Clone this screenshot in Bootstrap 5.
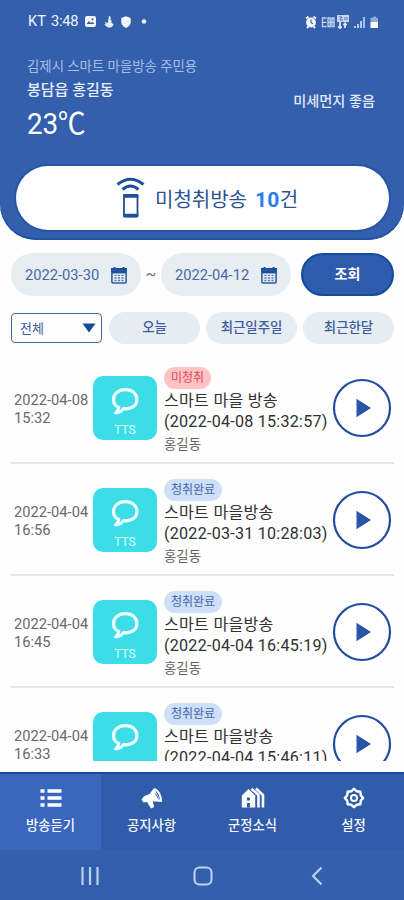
<!DOCTYPE html>
<html lang="ko">
<head>
<meta charset="utf-8">
<meta name="viewport" content="width=device-width, initial-scale=1">
<title>김제시 스마트 마을방송</title>
<link href="https://cdn.jsdelivr.net/npm/bootstrap@5.3.0/dist/css/bootstrap.min.css" rel="stylesheet">
<style>
:root{--brand:#335fad;--deep:#164a9c}
body{font-family:Roboto,"Noto Sans CJK KR",sans-serif;background:#335fad;line-height:1}
svg{display:block;flex:none}
.phone{width:404px;height:900px;background:#fefefe;overflow:hidden}
.top-area{height:240px;flex:none;background:var(--brand);border-radius:0 0 36px 36px;box-shadow:inset 0 -2px 0 #2353a3}
.status{height:42px;padding:1px 25px 0 28px;color:#f1f5fd;font-size:14.6px}
.status .clock{margin-left:5px;letter-spacing:-.2px}
.who{height:124px;padding:15px 29px 0 27px}
.app-name{font-size:13.4px;line-height:20px;color:#a6bfe6}
.town{font-size:15px;line-height:27px;font-weight:500;color:#e6eefc}
.temp{font-size:30px;line-height:40px;color:#fff}
.temp span{letter-spacing:-.3px;display:inline-block;transform:scaleX(.93);transform-origin:left}
.dust{font-size:14.2px;font-weight:500;color:#e0e9fa;padding-top:37px}
.notice{height:64px;margin:0 15px 0 16px;background:#fff;box-shadow:0 0 0 2px #2555a5;color:#2c5295;font-size:20px;padding:0 0 0 100px}
.notice .phrase{margin:4px 0 0 10px}
.notice b{color:#2a7de8;font-weight:700;font-size:21px;letter-spacing:.3px}
.filters{padding:13px 10px 0 11px}
.date-box{width:130px;height:43px;background:#e8edf4;color:#4668a4;font-size:14.7px;padding:1px 14px 0 14px}
.tilde{width:20px}
.quick{gap:6px}
.soft{height:32px;background:#e7ebf2;color:#3b5c9c;font-size:13.4px;font-weight:500}
.query{width:93px;height:43px;background:#2d5cac;color:#fff;font-size:14px;font-weight:700;border:2px solid #164a9c}
.kind{width:91px;height:30px;margin-right:1px;border:1px solid #44699f;border-radius:4px;color:#3b5c9c;font-size:13px;padding:0 5px 0 8px}
.feed{height:417px;flex:none;overflow:hidden;padding:0 10px 0 11px}
.entry{height:112px;flex:none;border-bottom:2px solid #e4e4e4;padding:0 3px 0 3px}
.entry:first-child{height:120.4px;padding-top:8.4px}
.stamp{width:79px;font-size:14.7px;line-height:18px;color:#696969;padding-top:39px}
.tile{width:64px;height:64px;margin-top:24px;background:#3bdde7;border-radius:10px;color:#e4ffff;font-size:12px;padding-top:10px}
.info{width:172px;padding:15px 0 0 7px;white-space:nowrap;color:#303030}
.tag{display:inline-block;height:22px;line-height:23px;border-radius:11px;padding:0 7px;font-size:12px}
.unheard{background:#ffc3c4;color:#df4a58}
.heard{background:#cfdff8;color:#4166ab}
.subject{font-size:16.1px;line-height:20.5px;letter-spacing:.25px;margin-top:2px}
.sender{font-size:13.4px;line-height:16px;color:#666;margin-top:5px}
.play{margin:26px -1px 0 0}
.tabs{height:78px;flex:none;background:#305cab;border-top:2px solid #174a9e;color:#f4f7ff;font-size:13.3px;font-weight:500}
.tabs .tab{padding-top:13px}
.tabs .tab span{margin-top:10px}
.tabs .on{background:#3967bd}
.keys{height:50px;flex:none;background:#335fad;padding:1px 81px 0 80px}
.keys .home{margin-right:5px}
</style>
</head>
<body>
<svg width="0" height="0" class="d-none">
<symbol id="cal" viewBox="0 0 16 18"><path d="M1 3h14v3H1zM3.5 1v3M12.5 1v3" fill="#1b4f9e" stroke="#1b4f9e" stroke-width="2"/><rect x=".9" y="5" width="14.2" height="12" rx="1" fill="#e8edf4" stroke="#315f9f" stroke-width="1.6"/><path d="M1 6.2h14" stroke="#1b4f9e" stroke-width="2.4"/><path d="M3.4 9.4h9.3M3.4 12h9.3M3.4 14.5h9.3" stroke="#5b7eb2" stroke-width="1.4" stroke-dasharray="2.2 1.3"/></symbol>
<symbol id="bubble" viewBox="0 0 28 28"><path d="M14.5 3.4c-6.3 0-11.2 3.7-11.2 9.1 0 3.4 1.8 6 4.8 7.5-.4 2.3-1.3 3.8-2.9 5.2 3.3-.2 5.7-1.8 7.4-4.1 7.7 1 12.5-3 12.5-8.6 0-5.4-4.7-9.1-10.6-9.1z" fill="none" stroke="#f2ffff" stroke-width="3" stroke-linejoin="round"/></symbol>
<symbol id="playicon" viewBox="0 0 60 60"><circle cx="30" cy="30" r="28" fill="#fff" stroke="#214da0" stroke-width="2.2"/><path d="M24.5 20.7v18.6L39 30z" fill="#2a58a8"/></symbol>
</svg>
<div class="phone d-flex flex-column">
<header class="top-area">
  <div class="status d-flex align-items-center">
    <span>KT</span><span class="clock">3:48</span>
    <svg style="margin-left:7px" width="11" height="11" viewBox="0 0 11 11"><rect width="11" height="11" rx="2" fill="#f1f5fd"/><path d="M1.500 8l2.400-3 2 2 1.500-1.300L9.500 8z" fill="#335fad"/><circle cx="7.500" cy="3.300" r="1" fill="#335fad"/></svg>
    <svg class="ms-2" width="10" height="12" viewBox="0 0 10 12"><path d="M5 0c2 .5 2.200 2 1.300 3.500L8 5 7 6.500l2.600 1.700C9 11 6.500 12 4 11.500L.2 8.800 1.800 8 .8 6l3 1z" fill="#e8effc"/></svg>
    <svg style="margin-left:7px" width="10" height="12" viewBox="0 0 10 12"><path d="M5 .2 9.700 2v4.200C9.500 9 7.500 11 5 12 2.500 11 .5 9 .3 6.200V2z" fill="#f5f8ff"/></svg>
    <svg class="ms-2" width="10" height="5" viewBox="0 0 10 5"><circle cx="5" cy="2.500" r="2.300" fill="#f1f5fd"/></svg>
    <svg class="ms-auto" width="74" height="16" viewBox="0 0 74 16">
      <circle cx="6" cy="8.500" r="4.900" fill="#f1f5fd"/><path d="M1 4.500 3.500 2.500M11 4.500 8.500 2.500M2 14l1.500-1.500M10 14l-1.500-1.500" stroke="#f1f5fd" stroke-width="1.800"/><path d="M6 5.500v3.200l2 1" fill="none" stroke="#335fad" stroke-width="1.100"/>
      <g fill="none" stroke="#c5d5f1" stroke-width="1.300"><path d="M21.500 4h-4v8.500h4M17.500 8.300h4M23 4h2.200v8.500H23zM27 4h2v8.500h-2zM23 8.300h6"/></g>
      <path d="M32 1h12v7H32z" fill="#c5d5f1"/><path d="M34 3h3l-2 3h3M40 3v3M42 3v3" fill="none" stroke="#335fad" stroke-width=".8"/><path d="M35 14V8M33.300 12.500 35 14l1.600-1.500M40 14V8.500M38.400 11 40 9.500l1.600 1.500" fill="none" stroke="#e1eafa" stroke-width="1.800"/>
      <path d="M49 12h2v2h-2zM52 10h2v4h-2zM55 7h2v7h-2z" fill="#b9cbea"/><path d="M58 3h2v11h-2z" fill="#a5bce4"/>
      <path d="M68 2.500h3v1.300h2V8h-7.500V3.800H68z" fill="#8facdc"/><path d="M65.500 8H73v6h-7.500z" fill="#fff"/>
    </svg>
  </div>
  <div class="who d-flex justify-content-between">
    <div><div class="app-name">김제시 스마트 마을방송 주민용</div><div class="town">봉담읍 홍길동</div><div class="temp"><span>23℃</span></div></div>
    <div class="dust">미세먼지 좋음</div>
  </div>
  <div class="notice rounded-pill d-flex align-items-center">
    <svg width="29" height="44" viewBox="0 0 29 44" fill="none" stroke="#1e5099"><path d="M1.500 8.500q13-10.500 26 0" stroke-width="3"/><path d="M6.500 13.500q8-7 16 0" stroke-width="3"/><rect x="8" y="19" width="13.500" height="21.500" rx="1" stroke-width="1.800"/><path d="M7.200 20h15.100M7.200 39.500h15.100" stroke-width="3.400"/></svg>
    <div class="phrase"><span>미청취방송</span><span class="ms-2"><b>10</b>건</span></div>
  </div>
</header>
<section class="filters flex-shrink-0">
  <div class="d-flex align-items-center">
    <div class="date-box rounded-pill d-flex align-items-center justify-content-between"><span>2022-03-30</span><svg width="16" height="18"><use href="#cal"/></svg></div>
    <span class="tilde text-center text-secondary">~</span>
    <div class="date-box rounded-pill d-flex align-items-center justify-content-between"><span>2022-04-12</span><svg width="16" height="18"><use href="#cal"/></svg></div>
    <button class="query btn rounded-pill p-0 ms-auto">조회</button>
  </div>
  <div class="quick d-flex align-items-center mt-3">
    <div class="kind flex-shrink-0 d-flex align-items-center justify-content-between"><span>전체</span><svg width="14" height="10" viewBox="0 0 14 10"><path d="M.5.5h13L7 9.500z" fill="#164a9c"/></svg></div>
    <div class="soft col rounded-pill d-flex align-items-center justify-content-center">오늘</div>
    <div class="soft col rounded-pill d-flex align-items-center justify-content-center">최근일주일</div>
    <div class="soft col rounded-pill d-flex align-items-center justify-content-center">최근한달</div>
  </div>
</section>
<main class="feed d-flex flex-column">
  <article class="entry d-flex">
    <div class="stamp">2022-04-08<br>15:32</div>
    <div class="tile d-flex flex-column align-items-center"><svg width="30" height="30"><use href="#bubble"/></svg><span class="mt-1 pt-1">TTS</span></div>
    <div class="info"><span class="tag unheard">미청취</span><div class="subject">스마트 마을 방송<br>(2022-04-08 15:32:57)</div><div class="sender">홍길동</div></div>
    <svg class="play ms-auto" width="60" height="60"><use href="#playicon"/></svg>
  </article>
  <article class="entry d-flex">
    <div class="stamp">2022-04-04<br>16:56</div>
    <div class="tile d-flex flex-column align-items-center"><svg width="30" height="30"><use href="#bubble"/></svg><span class="mt-1 pt-1">TTS</span></div>
    <div class="info"><span class="tag heard">청취완료</span><div class="subject">스마트 마을방송<br>(2022-03-31 10:28:03)</div><div class="sender">홍길동</div></div>
    <svg class="play ms-auto" width="60" height="60"><use href="#playicon"/></svg>
  </article>
  <article class="entry d-flex">
    <div class="stamp">2022-04-04<br>16:45</div>
    <div class="tile d-flex flex-column align-items-center"><svg width="30" height="30"><use href="#bubble"/></svg><span class="mt-1 pt-1">TTS</span></div>
    <div class="info"><span class="tag heard">청취완료</span><div class="subject">스마트 마을방송<br>(2022-04-04 16:45:19)</div><div class="sender">홍길동</div></div>
    <svg class="play ms-auto" width="60" height="60"><use href="#playicon"/></svg>
  </article>
  <article class="entry d-flex">
    <div class="stamp">2022-04-04<br>16:33</div>
    <div class="tile d-flex flex-column align-items-center"><svg width="30" height="30"><use href="#bubble"/></svg></div>
    <div class="info"><span class="tag heard">청취완료</span><div class="subject">스마트 마을방송<br>(2022-04-04 15:46:11)</div></div>
    <svg class="play ms-auto" width="60" height="60"><use href="#playicon"/></svg>
  </article>
</main>
<nav class="tabs d-flex mt-auto">
  <div class="tab on col d-flex flex-column align-items-center"><svg width="24" height="22" viewBox="0 0 24 22" stroke="#fff" stroke-width="3.400"><path d="M1.500 4h4M8.500 4h14M1.500 11h4M8.500 11h14M1.500 18h4M8.500 18h14"/></svg><span>방송듣기</span></div>
  <div class="tab col d-flex flex-column align-items-center"><svg width="24" height="22" viewBox="0 0 24 22"><path d="M1.500 12.500 4 9.200l5.500-2.200L14 1l7 14-8-.8 1 5.800-3 1.500-4-6.500-3.500.5z" fill="#fff"/><path d="M14.500 1.800c4 2 6.500 7 6.700 13" fill="none" stroke="#fff" stroke-width="2"/><path d="M14.500 5.500q3.500 2.500 4.300 7.700z" fill="#305cab"/></svg><span>공지사항</span></div>
  <div class="tab col d-flex flex-column align-items-center"><svg width="24" height="22" viewBox="0 0 24 22"><path d="M.8 8.500 7.500 2l6.700 6.500v12H.8z" fill="#fff"/><path d="M6 10.500h3v3H6zM6 16h3v4.500H6z" fill="#305cab"/><path d="M10.500 1.800l7 6.200v12.500M15 1.500l7 6.500v12.500" fill="none" stroke="#fff" stroke-width="2.600"/></svg><span>군정소식</span></div>
  <div class="tab col d-flex flex-column align-items-center"><svg width="22" height="22" viewBox="0 0 22 22" fill="none" stroke="#fff"><path d="M11 1.800 13.600 4.200 17.300 4.700 17.800 8.400 20.200 11 17.800 13.600 17.300 17.300 13.600 17.800 11 20.200 8.400 17.800 4.700 17.300 4.200 13.600 1.800 11 4.200 8.400 4.700 4.700 8.400 4.200z" stroke-width="2.400" stroke-linejoin="round"/><circle cx="11" cy="11" r="3" stroke-width="2"/></svg><span>설정</span></div>
</nav>
<footer class="keys d-flex align-items-center justify-content-between">
  <svg width="20" height="20" viewBox="0 0 20 20" stroke="#bcd0f2" stroke-width="2.200"><path d="M2.500 1v18M10 1v18M17.500 1v18"/></svg>
  <svg class="home" width="20" height="20" viewBox="0 0 20 20" fill="none" stroke="#c3d5f4" stroke-width="2"><rect x="1.500" y="1.500" width="17" height="17" rx="5"/></svg>
  <svg width="12" height="20" viewBox="0 0 12 20" fill="none" stroke="#c3d5f4" stroke-width="2"><path d="M10.500 1.500 2 10l8.500 8.500"/></svg>
</footer>
</div>
<script src="https://cdn.jsdelivr.net/npm/bootstrap@5.3.0/dist/js/bootstrap.bundle.min.js"></script>
</body>
</html>
